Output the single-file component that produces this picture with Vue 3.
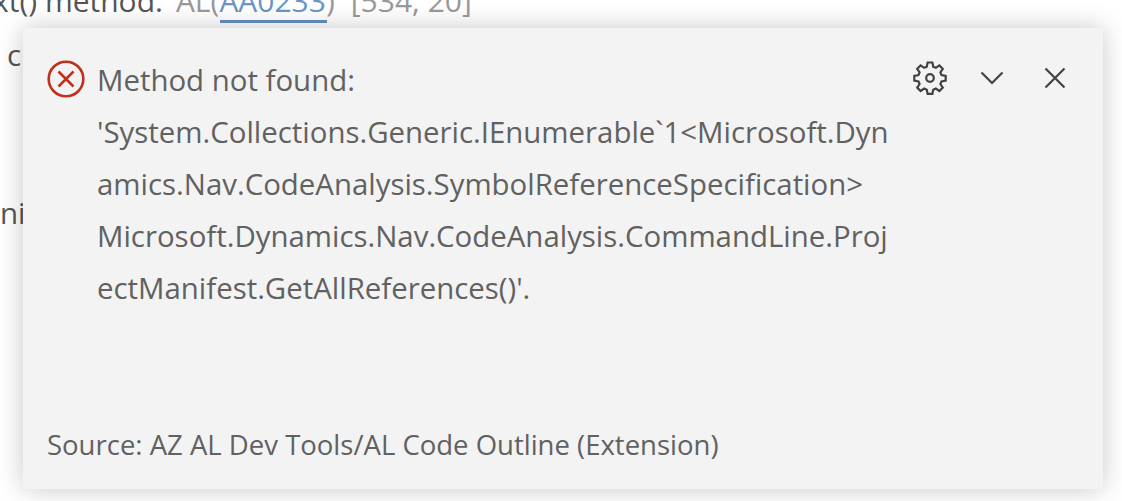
<template>
  <div class="editor">
    <!-- code behind the hover -->
    <div class="code-line top-line">
      <span class="code-text">xt() method:</span>
      <span class="diag">AL(<span class="diag-link">AA0233</span>)</span>
      <span class="diag pos">[534, 20]</span>
    </div>
    <div class="code-line frag-c">c</div>
    <div class="code-line frag-ni">ni</div>

    <div class="hover">
      <div class="hover-main">
        <svg class="err-icon" width="38" height="38" viewBox="0 0 38 38">
          <circle cx="19" cy="19" r="17.3" fill="none" stroke="#c1301c" stroke-width="2.6" />
          <path d="M11.5 11.5 26.5 26.5M26.5 11.5 11.5 26.5" fill="none" stroke="#c1301c" stroke-width="2.6" />
        </svg>
        <div class="message">
          <div v-for="line in lines" :key="line" class="msg-line">{{ line }}</div>
        </div>
        <div class="actions">
          <svg width="36" height="36" viewBox="0 0 36 36">
            <path
              fill="none"
              stroke="#424242"
              stroke-width="2.2"
              stroke-linejoin="miter"
              d="M15.6 2.5h4.8l.8 4.2 2.6 1.1 3.6-2.4 3.4 3.4-2.4 3.6 1.1 2.6 4.2.8v4.8l-4.2.8-1.1 2.6 2.4 3.6-3.4 3.4-3.6-2.4-2.6 1.1-.8 4.2h-4.8l-.8-4.2-2.6-1.1-3.6 2.4-3.4-3.4 2.4-3.6-1.1-2.6-4.2-.8v-4.8l4.2-.8 1.1-2.6-2.4-3.6 3.4-3.4 3.6 2.4 2.6-1.1z"
            />
            <circle cx="18" cy="18" r="3.8" fill="none" stroke="#424242" stroke-width="2.2" />
          </svg>
          <svg width="26" height="16" viewBox="0 0 26 16">
            <path d="M2.5 2.5 13 13 23.5 2.5" fill="none" stroke="#424242" stroke-width="2.2" />
          </svg>
          <svg class="close" width="24" height="24" viewBox="0 0 24 24">
            <path d="M2.5 2.5 21.5 21.5M21.5 2.5 2.5 21.5" fill="none" stroke="#424242" stroke-width="2.2" />
          </svg>
        </div>
      </div>
      <div class="source">Source: AZ AL Dev Tools/AL Code Outline (Extension)</div>
    </div>
  </div>
</template>

<script setup>
const lines = [
  "Method not found:",
  "'System.Collections.Generic.IEnumerable`1<Microsoft.Dyn",
  "amics.Nav.CodeAnalysis.SymbolReferenceSpecification>",
  "Microsoft.Dynamics.Nav.CodeAnalysis.CommandLine.Proj",
  "ectManifest.GetAllReferences()'.",
];
</script>

<style>
html,
body {
  margin: 0;
  background: #fff;
  overflow: hidden;
}
</style>

<style scoped>
.editor {
  position: relative;
  width: 1122px;
  height: 501px;
  overflow: hidden;
  font-family: "Open Sans", "Noto Sans", sans-serif;
  background: #fff;
}

.code-line {
  position: absolute;
  font-size: 29.5px;
  line-height: 36px;
  color: #555;
  white-space: nowrap;
}

.top-line {
  left: -7px;
  top: -17px;
  font-size: 30px;
  display: flex;
  gap: 13px;
}

.diag {
  color: #999;
}

.diag-link {
  color: #6a95c6;
}

.pos {
  margin-left: 3px;
}

.frag-c {
  left: 7px;
  top: 37px;
}

.frag-ni {
  left: 0;
  top: 195px;
}

.top-line::after {
  content: "";
  position: absolute;
  left: 227px;
  top: 37px;
  width: 107px;
  height: 3px;
  background: #6890c0;
}

/* hover panel */
.hover {
  position: absolute;
  left: 23px;
  top: 28px;
  width: 1080px;
  height: 461px;
  box-sizing: border-box;
  background: #f3f3f3;
  box-shadow: 0 0 24px rgba(0, 0, 0, 0.22);
  display: flex;
  flex-direction: column;
  justify-content: space-between;
  padding: 26px 36px 27px 24px;
  color: #616161;
}

.hover-main {
  display: flex;
  align-items: flex-start;
}

.err-icon {
  flex: none;
  margin-top: 6px;
  margin-right: 12px;
}

.message {
  flex: 1;
  font-size: 29.4px;
  line-height: 52px;
  white-space: nowrap;
}

.actions {
  display: flex;
  align-items: center;
  gap: 31px;
  margin-top: 6px;
}

.close {
  margin-left: 7px;
}

.source {
  font-size: 27.5px;
  line-height: 34px;
  white-space: nowrap;
}
</style>
